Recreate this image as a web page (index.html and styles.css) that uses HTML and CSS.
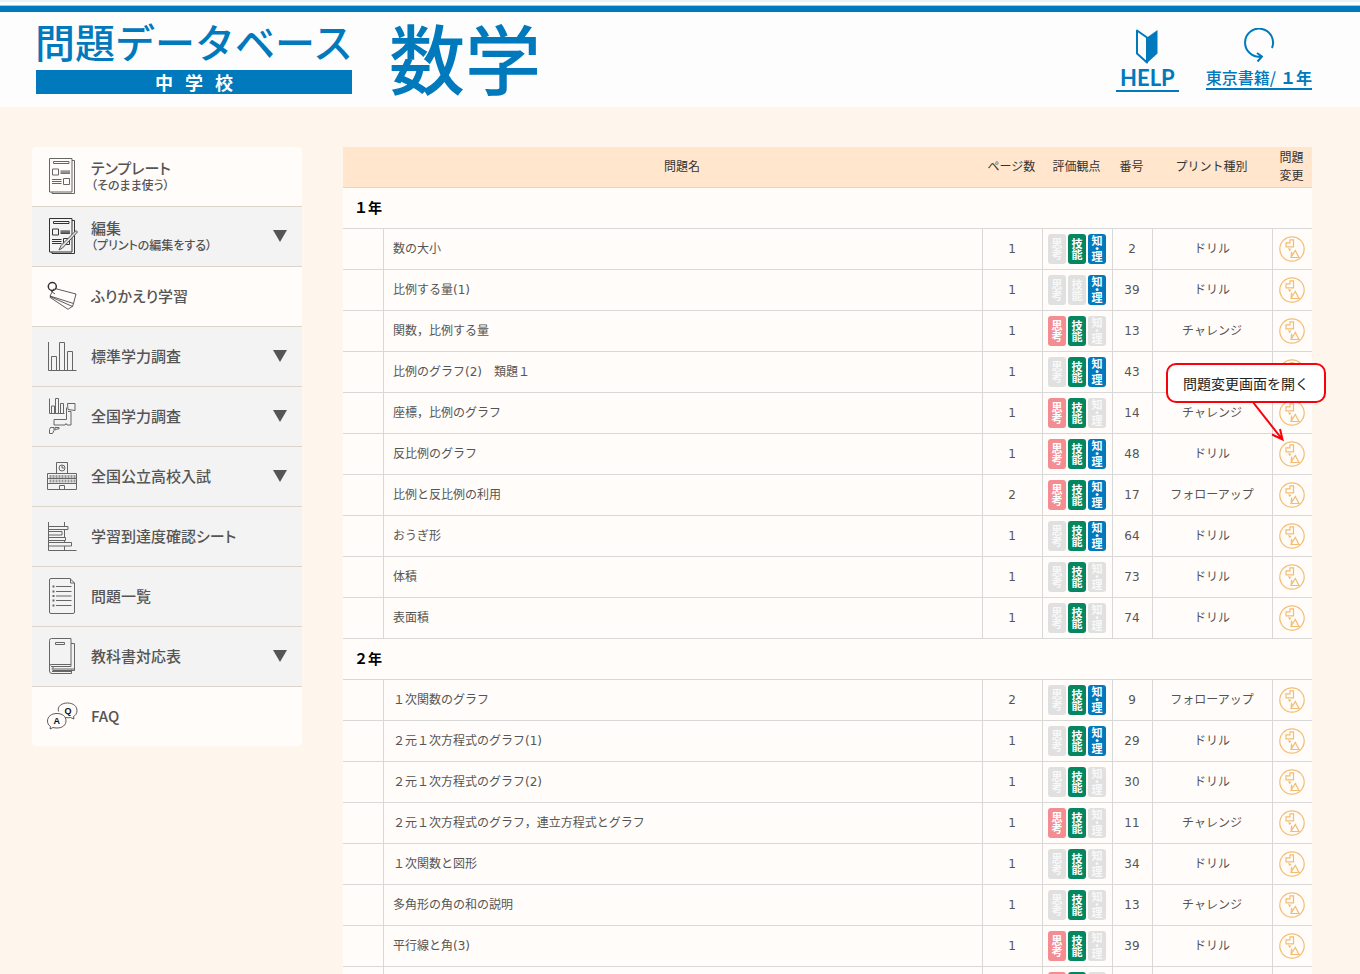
FILE: index.html
```html
<!DOCTYPE html>
<html lang="ja">
<head>
<meta charset="utf-8">
<title>問題データベース 中学校 数学</title>
<link rel="stylesheet" href="styles.css">
</head>
<body>
<svg class="defs" aria-hidden="true">
  <symbol id="swap" viewBox="0 0 26 26">
    <circle cx="13" cy="13" r="12.200"/>
    <path d="M11 3.800h3.500v7h-7.500v-4h4zM12 21.500l4.300-7 3.700 7zM12.300 21v-4"/>
    <path class="solid" d="M9 12l3.500 1-2 2.300zM12 15l2 2.500-2 .5z"/>
  </symbol>
  <symbol id="sheet" viewBox="0 0 32 38">
    <path d="M3.500 1.500h22.500v33.500h-22.500zM26 3.500h2.500v33h-22.500v-1.500M7.500 4.500h15.500v2h-15.500zM6.500 12h6v6h-6zM17.500 21.500h6v6h-6z"/>
    <path d="M14.500 14h9.500M14.500 15.200h9.500M14.500 16.400h9.500M6 22.500h9.500M6 24.500h9.500M6 26.500h9.500"/>
  </symbol>
</svg>

<header class="header">
  <div class="brand">
    <div class="brand-name">問題データベース</div>
    <div class="brand-school"><span>中</span><span>学</span><span>校</span></div>
  </div>
  <h1 class="subject">数学</h1>
  <nav class="tools">
    <a class="tool" href="#help">
      <svg class="tool-icon" width="24" height="38" viewBox="0 0 24 38"><path class="line" d="M12 9.500L2 2.500v23l10 9z"/><path class="fill" d="M12 9.500L22.500 2v23.500L12 35z"/></svg>
      <span class="tool-label help">HELP</span>
    </a>
    <a class="tool" href="#textbook">
      <svg class="tool-icon" width="34" height="38" viewBox="0 0 34 38"><path class="line" d="M30 20A14 14 0 1 0 19 28.500M15 25l5 3.500-4.500 5"/></svg>
      <span class="tool-label">東京書籍/<b>１年</b></span>
    </a>
  </nav>
</header>

<div class="page">
  <nav class="menu">
    <a class="item light" href="#template">
      <svg class="icon"><use href="#sheet"/></svg>
      <span class="label">テンプレート<small>（そのまま使う）</small></span>
    </a>
    <button class="item" type="button">
      <svg class="icon dark" viewBox="0 0 32 38"><use href="#sheet" width="32" height="38"/><path class="pencil" d="M13 33l2-4.500L30 13.500l1.500 1.500L16.500 31z"/></svg>
      <span class="label">編集<small>（プリントの編集をする）</small></span>
      <span class="arrow"></span>
    </button>
    <a class="item light" href="#review">
      <svg class="icon dark" viewBox="0 0 32 38"><circle class="ring" cx="6.300" cy="9.500" r="4"/><path class="thin" d="M9 11.500L30 17l-2.500 9.500L4 19l4-7.500M4 19.500l22.500 10 1-3M3.500 20L22 32.300l4.500-3M5 14l4 3"/></svg>
      <span class="label">ふりかえり学習</span>
    </a>
    <button class="item" type="button">
      <svg class="icon" viewBox="0 0 32 38"><path d="M2.500 5v28.500h28M5.500 33.500v-14h5v14M13.500 33.500v-28h5v28M21.500 33.500v-19h5v19"/></svg>
      <span class="label">標準学力調査</span>
      <span class="arrow"></span>
    </button>
    <button class="item" type="button">
      <svg class="icon" viewBox="0 0 32 38"><path d="M3.500 1.500v15h15M5.500 16.500v-7.500h3v7.500M9.500 16.500v-15h3v15M14.500 16.500v-10h3v10M21.500 6.500h7.500v7l-7-1zM20.500 10.500v12h-12.500v5.500h11l1-1.500 1 1.500h4v-13.500h-3M4.500 30.500h3.500v3l-1.500 3h-3v-4zM9 30.500h4v1.500h-2l-2 1z"/></svg>
      <span class="label">全国学力調査</span>
      <span class="arrow"></span>
    </button>
    <button class="item" type="button">
      <svg class="icon" viewBox="0 0 32 38"><path d="M10.500 16.500v-11h11v11M1.500 16.500h29v16h-29zM1.500 26.500h29M13.500 32.500v-4h5v4M16 8.500v2.500h2M2 21.500h28"/><circle cx="16" cy="11" r="3"/><path class="windows" d="M3.500 19.500h26M3.500 24h26"/></svg>
      <span class="label">全国公立高校入試</span>
      <span class="arrow"></span>
    </button>
    <a class="item" href="#check">
      <svg class="icon" viewBox="0 0 32 38"><path d="M2.500 5v28.500h28M18.500 5v4M18.500 12v8M18.500 23v2M18.500 29v4M2.500 9.500h19.500v3h-19.500M2.500 14.500h13.500v3.500h-13.500M2.500 20.500h17v3h-17M2.500 25.500h23v3.500h-23"/></svg>
      <span class="label">学習到達度確認シート</span>
    </a>
    <a class="item" href="#list">
      <svg class="icon" viewBox="0 0 32 38"><path d="M5 1.500h19l4.500 4.500v29q0 1.500-1.500 1.500h-22q-1.500 0-1.500-1.500v-32q0-1.500 1.500-1.500zM24.500 1.500v4.500h4M10 9.500h15.500M10 14.500h15.500M10 19h15.500M10 23.500h15.500M10 28.500h15.500"/><path class="dots" d="M6.500 9.500h2M6.500 14.500h2M6.500 19h2M6.500 23.500h2M6.500 28.500h2"/></svg>
      <span class="label">問題一覧</span>
    </a>
    <button class="item" type="button">
      <svg class="icon" viewBox="0 0 32 38"><path d="M5.500 1.500h19.500v26h-20q-1.500 0-1.500 2v-26q0-2 2-2zM9.500 5.500h9v2h-9zM25 6.500h3.500v25.500h-23M3.500 29v5q0 2.500 2.500 2.500h19.500v-4M5 29.500h20v-2M6 34.500h19M7 29.500v2.500M28.500 29.500v4h-22"/></svg>
      <span class="label">教科書対応表</span>
      <span class="arrow"></span>
    </button>
    <a class="item light" href="#faq">
      <svg class="icon dark" viewBox="0 0 32 38"><path class="thin" d="M12.500 14.500C11 9 16 6 21.500 6c6 0 9.500 3.500 9.500 7.500 0 3-1.500 5-3.500 6l.5 2.500-3.500-1.500q-2 .5-5 0M11 16.500c5.500 0 9 3 9 7.300s-3.500 7.200-9 7.200q-2 0-4-.5l-3 1.500.5-2.500c-2-1.500-3-3-3-5.500 0-4.500 4-7.500 9.500-7.500z"/><text x="7.500" y="27">A</text><text x="18.500" y="16.500">Q</text></svg>
      <span class="label">FAQ</span>
    </a>
  </nav>

  <table class="problems">
    <colgroup><col class="c-mark"><col><col class="c-pages"><col class="c-view"><col class="c-no"><col class="c-kind"><col class="c-edit"></colgroup>
    <thead>
      <tr><th></th><th>問題名</th><th>ページ数</th><th>評価観点</th><th>番号</th><th>プリント種別</th><th>問題<br>変更</th></tr>
    </thead>
    <tbody>
      <tr class="grade"><th colspan="7">１年</th></tr>
      <tr><td></td><td>数の大小</td><td>1</td><td><span class="tags"><span class="tag">思考</span><span class="tag green">技能</span><span class="tag blue">知・理</span></span></td><td>2</td><td>ドリル</td><td><button class="swap" type="button" aria-label="問題変更"><svg><use href="#swap"/></svg></button></td></tr>
      <tr><td></td><td>比例する量(1)</td><td>1</td><td><span class="tags"><span class="tag">思考</span><span class="tag">技能</span><span class="tag blue">知・理</span></span></td><td>39</td><td>ドリル</td><td><button class="swap" type="button" aria-label="問題変更"><svg><use href="#swap"/></svg></button></td></tr>
      <tr><td></td><td>関数，比例する量</td><td>1</td><td><span class="tags"><span class="tag red">思考</span><span class="tag green">技能</span><span class="tag">知・理</span></span></td><td>13</td><td>チャレンジ</td><td><button class="swap" type="button" aria-label="問題変更"><svg><use href="#swap"/></svg></button></td></tr>
      <tr><td></td><td>比例のグラフ(2)　類題１</td><td>1</td><td><span class="tags"><span class="tag">思考</span><span class="tag green">技能</span><span class="tag blue">知・理</span></span></td><td>43</td><td></td><td><button class="swap" type="button" aria-label="問題変更"><svg><use href="#swap"/></svg></button></td></tr>
      <tr><td></td><td>座標，比例のグラフ</td><td>1</td><td><span class="tags"><span class="tag red">思考</span><span class="tag green">技能</span><span class="tag">知・理</span></span></td><td>14</td><td>チャレンジ</td><td><button class="swap" type="button" aria-label="問題変更"><svg><use href="#swap"/></svg></button></td></tr>
      <tr><td></td><td>反比例のグラフ</td><td>1</td><td><span class="tags"><span class="tag red">思考</span><span class="tag green">技能</span><span class="tag blue">知・理</span></span></td><td>48</td><td>ドリル</td><td class="pointed"><button class="swap" type="button" aria-label="問題変更"><svg><use href="#swap"/></svg></button><span class="callout" role="tooltip">問題変更画面を開く<svg class="pointer" viewBox="0 0 36 42"><path d="M2 0l30 38M22 33.500l10.500 5L30 28"/></svg></span></td></tr>
      <tr><td></td><td>比例と反比例の利用</td><td>2</td><td><span class="tags"><span class="tag red">思考</span><span class="tag green">技能</span><span class="tag blue">知・理</span></span></td><td>17</td><td>フォローアップ</td><td><button class="swap" type="button" aria-label="問題変更"><svg><use href="#swap"/></svg></button></td></tr>
      <tr><td></td><td>おうぎ形</td><td>1</td><td><span class="tags"><span class="tag">思考</span><span class="tag green">技能</span><span class="tag blue">知・理</span></span></td><td>64</td><td>ドリル</td><td><button class="swap" type="button" aria-label="問題変更"><svg><use href="#swap"/></svg></button></td></tr>
      <tr><td></td><td>体積</td><td>1</td><td><span class="tags"><span class="tag">思考</span><span class="tag green">技能</span><span class="tag">知・理</span></span></td><td>73</td><td>ドリル</td><td><button class="swap" type="button" aria-label="問題変更"><svg><use href="#swap"/></svg></button></td></tr>
      <tr><td></td><td>表面積</td><td>1</td><td><span class="tags"><span class="tag">思考</span><span class="tag green">技能</span><span class="tag">知・理</span></span></td><td>74</td><td>ドリル</td><td><button class="swap" type="button" aria-label="問題変更"><svg><use href="#swap"/></svg></button></td></tr>
    </tbody>
    <tbody>
      <tr class="grade"><th colspan="7">２年</th></tr>
      <tr><td></td><td>１次関数のグラフ</td><td>2</td><td><span class="tags"><span class="tag">思考</span><span class="tag green">技能</span><span class="tag blue">知・理</span></span></td><td>9</td><td>フォローアップ</td><td><button class="swap" type="button" aria-label="問題変更"><svg><use href="#swap"/></svg></button></td></tr>
      <tr><td></td><td>２元１次方程式のグラフ(1)</td><td>1</td><td><span class="tags"><span class="tag">思考</span><span class="tag green">技能</span><span class="tag blue">知・理</span></span></td><td>29</td><td>ドリル</td><td><button class="swap" type="button" aria-label="問題変更"><svg><use href="#swap"/></svg></button></td></tr>
      <tr><td></td><td>２元１次方程式のグラフ(2)</td><td>1</td><td><span class="tags"><span class="tag">思考</span><span class="tag green">技能</span><span class="tag">知・理</span></span></td><td>30</td><td>ドリル</td><td><button class="swap" type="button" aria-label="問題変更"><svg><use href="#swap"/></svg></button></td></tr>
      <tr><td></td><td>２元１次方程式のグラフ，連立方程式とグラフ</td><td>1</td><td><span class="tags"><span class="tag red">思考</span><span class="tag green">技能</span><span class="tag">知・理</span></span></td><td>11</td><td>チャレンジ</td><td><button class="swap" type="button" aria-label="問題変更"><svg><use href="#swap"/></svg></button></td></tr>
      <tr><td></td><td>１次関数と図形</td><td>1</td><td><span class="tags"><span class="tag">思考</span><span class="tag green">技能</span><span class="tag">知・理</span></span></td><td>34</td><td>ドリル</td><td><button class="swap" type="button" aria-label="問題変更"><svg><use href="#swap"/></svg></button></td></tr>
      <tr><td></td><td>多角形の角の和の説明</td><td>1</td><td><span class="tags"><span class="tag">思考</span><span class="tag green">技能</span><span class="tag">知・理</span></span></td><td>13</td><td>チャレンジ</td><td><button class="swap" type="button" aria-label="問題変更"><svg><use href="#swap"/></svg></button></td></tr>
      <tr><td></td><td>平行線と角(3)</td><td>1</td><td><span class="tags"><span class="tag red">思考</span><span class="tag green">技能</span><span class="tag">知・理</span></span></td><td>39</td><td>ドリル</td><td><button class="swap" type="button" aria-label="問題変更"><svg><use href="#swap"/></svg></button></td></tr>
      <tr><td></td><td></td><td></td><td><span class="tags"><span class="tag red"></span><span class="tag green"></span><span class="tag"></span></span></td><td></td><td></td><td></td></tr>
    </tbody>
  </table>
</div>
</body>
</html>
```
FILE: styles.css
```css
* { box-sizing: border-box; }

body {
  margin: 0;
  height: 100vh;
  overflow: hidden;
  background: #fef6ec;
  color: #555;
  font: 12px/18px "DejaVu Sans", "Noto Sans CJK JP", sans-serif;
}

svg { display: block; fill: none; }
.defs { position: absolute; width: 0; height: 0; }

.header {
  display: flex;
  align-items: flex-start;
  height: 107px;
  padding: 0 48px 0 36px;
  background: linear-gradient(#ebf2f5 2px, #fdfdfd 2px, #fdfdfd 5px, #b9c4cc 5px, #b9c4cc 6px, #0079bd 6px, #0079bd 12px, #fdfdfd 12px);
  color: #0079bd;
  font-family: "Noto Sans CJK JP", sans-serif;
}

.brand { width: 316px; padding-top: 12px; }
.brand-name {
  display: flex;
  justify-content: center;
  font-size: 40px;
  line-height: 58px;
  font-weight: 500;
  white-space: nowrap;
}
.brand-school {
  display: flex;
  justify-content: center;
  gap: 12px;
  height: 24px;
  background: #0079bd;
  color: #fff;
  font-size: 18px;
  line-height: 24px;
  font-weight: 700;
}
.subject {
  margin: 0;
  padding: 11px 0 0 37px;
  font-size: 76px;
  line-height: 90px;
  font-weight: 500;
}

.tools { display: flex; gap: 27px; margin-left: auto; padding-top: 28px; }
.tool {
  display: flex;
  flex-direction: column;
  align-items: center;
  color: inherit;
  text-decoration: none;
}
.tool .line { stroke: #0079bd; stroke-width: 2; stroke-linejoin: round; }
.tool .fill { fill: #0079bd; }
.tool-label {
  border-bottom: 2px solid #0079bd;
  font-size: 16px;
  line-height: 22px;
  font-weight: 500;
}
.tool-label b { margin-left: 4px; }
.tool-label.help { padding: 0 4px; font: 700 22px/24px Lato, sans-serif; }

.page { display: flex; align-items: flex-start; gap: 41px; padding: 40px 48px 0 32px; }

.menu {
  flex: 0 0 270px;
  overflow: hidden;
  border-radius: 4px;
  font-family: "Noto Sans CJK JP", sans-serif;
  font-feature-settings: "palt";
}
.item {
  display: flex;
  align-items: center;
  gap: 13px;
  width: 100%;
  height: 60px;
  padding: 0 15px 1px 14px;
  border: 0;
  border-bottom: 1px solid #dcd3cb;
  background: #f3f3f3;
  color: #555;
  font: inherit;
  font-feature-settings: inherit;
  text-align: left;
  text-decoration: none;
}
.item.light { background: #fffcfa; }
.item:last-child { height: 59px; border-bottom: 0; }
.icon { flex: none; width: 32px; height: 38px; stroke: #666; stroke-width: 1; }
.icon.dark { stroke: #333; }
.icon .thin { stroke-width: 0.8; }
.icon text { fill: #111; stroke: none; font: bold 9px "Liberation Sans", sans-serif; }
.icon .pencil { fill: #ddd; stroke: #555; }
.icon .ring { stroke-width: 1.5; }
.icon .windows { stroke-width: 3; stroke-dasharray: 2 1; stroke: #999; }
.icon .dots { stroke-width: 2; }
.label { flex: 1; font-size: 15px; line-height: 18px; font-weight: 500; }
.label small { display: block; font-size: 12px; line-height: 16px; }
.arrow {
  border: 7px solid transparent;
  border-top: 12px solid #555;
  border-bottom: 0;
}

.problems {
  flex: 1;
  min-width: 0;
  table-layout: fixed;
  border-spacing: 0;
  background: #fffcf9;
}
.c-mark, .c-no, .c-edit { width: 40px; }
.c-pages { width: 60px; }
.c-view { width: 70px; }
.c-kind { width: 120px; }

.problems th, .problems td {
  height: 41px;
  padding: 0 1px 0 0;
  border-bottom: 1px solid #d8d8d8;
  font-weight: 400;
  text-align: center;
  vertical-align: middle;
}
.problems thead th { background: #ffe6cd; color: #333; }
.problems td + td { border-left: 1px solid #d8d8d8; }
.problems td:nth-child(2) { padding-left: 9px; text-align: left; }
.problems .grade th {
  padding-left: 11px;
  color: #000;
  font-size: 14px;
  font-weight: 700;
  text-align: left;
}

.tags { display: flex; justify-content: center; gap: 2px; }
.tag {
  width: 18px;
  height: 30px;
  border-radius: 3px;
  background: #e0e0e0;
  color: #f8f8f8;
  font: 700 11px/18px "Noto Sans CJK JP", sans-serif;
  font-feature-settings: "vhal";
  text-align: center;
  white-space: nowrap;
  writing-mode: vertical-rl;
}
.tag.red { background: #f38d91; color: #fff; }
.tag.green { background: #048760; color: #fff; }
.tag.blue { background: #0079bd; color: #fff; }

.swap { display: block; margin: 0 auto; padding: 0; border: 0; background: none; }
.swap svg { width: 26px; height: 26px; stroke: #f2bd73; stroke-width: 1.2; }
.solid { fill: #f2bd73; stroke: none; }

.pointed { position: relative; }
.callout {
  position: absolute;
  right: -14px;
  bottom: 71px;
  padding: 9px 15px;
  border: 2px solid #fa000a;
  border-radius: 10px;
  background: #fff;
  color: #222;
  font: 14px/18px "Noto Sans CJK JP", sans-serif;
  white-space: nowrap;
}
.pointer {
  position: absolute;
  top: 100%;
  right: 38px;
  width: 36px;
  height: 42px;
  stroke: #fa000a;
  stroke-width: 2;
}
```
